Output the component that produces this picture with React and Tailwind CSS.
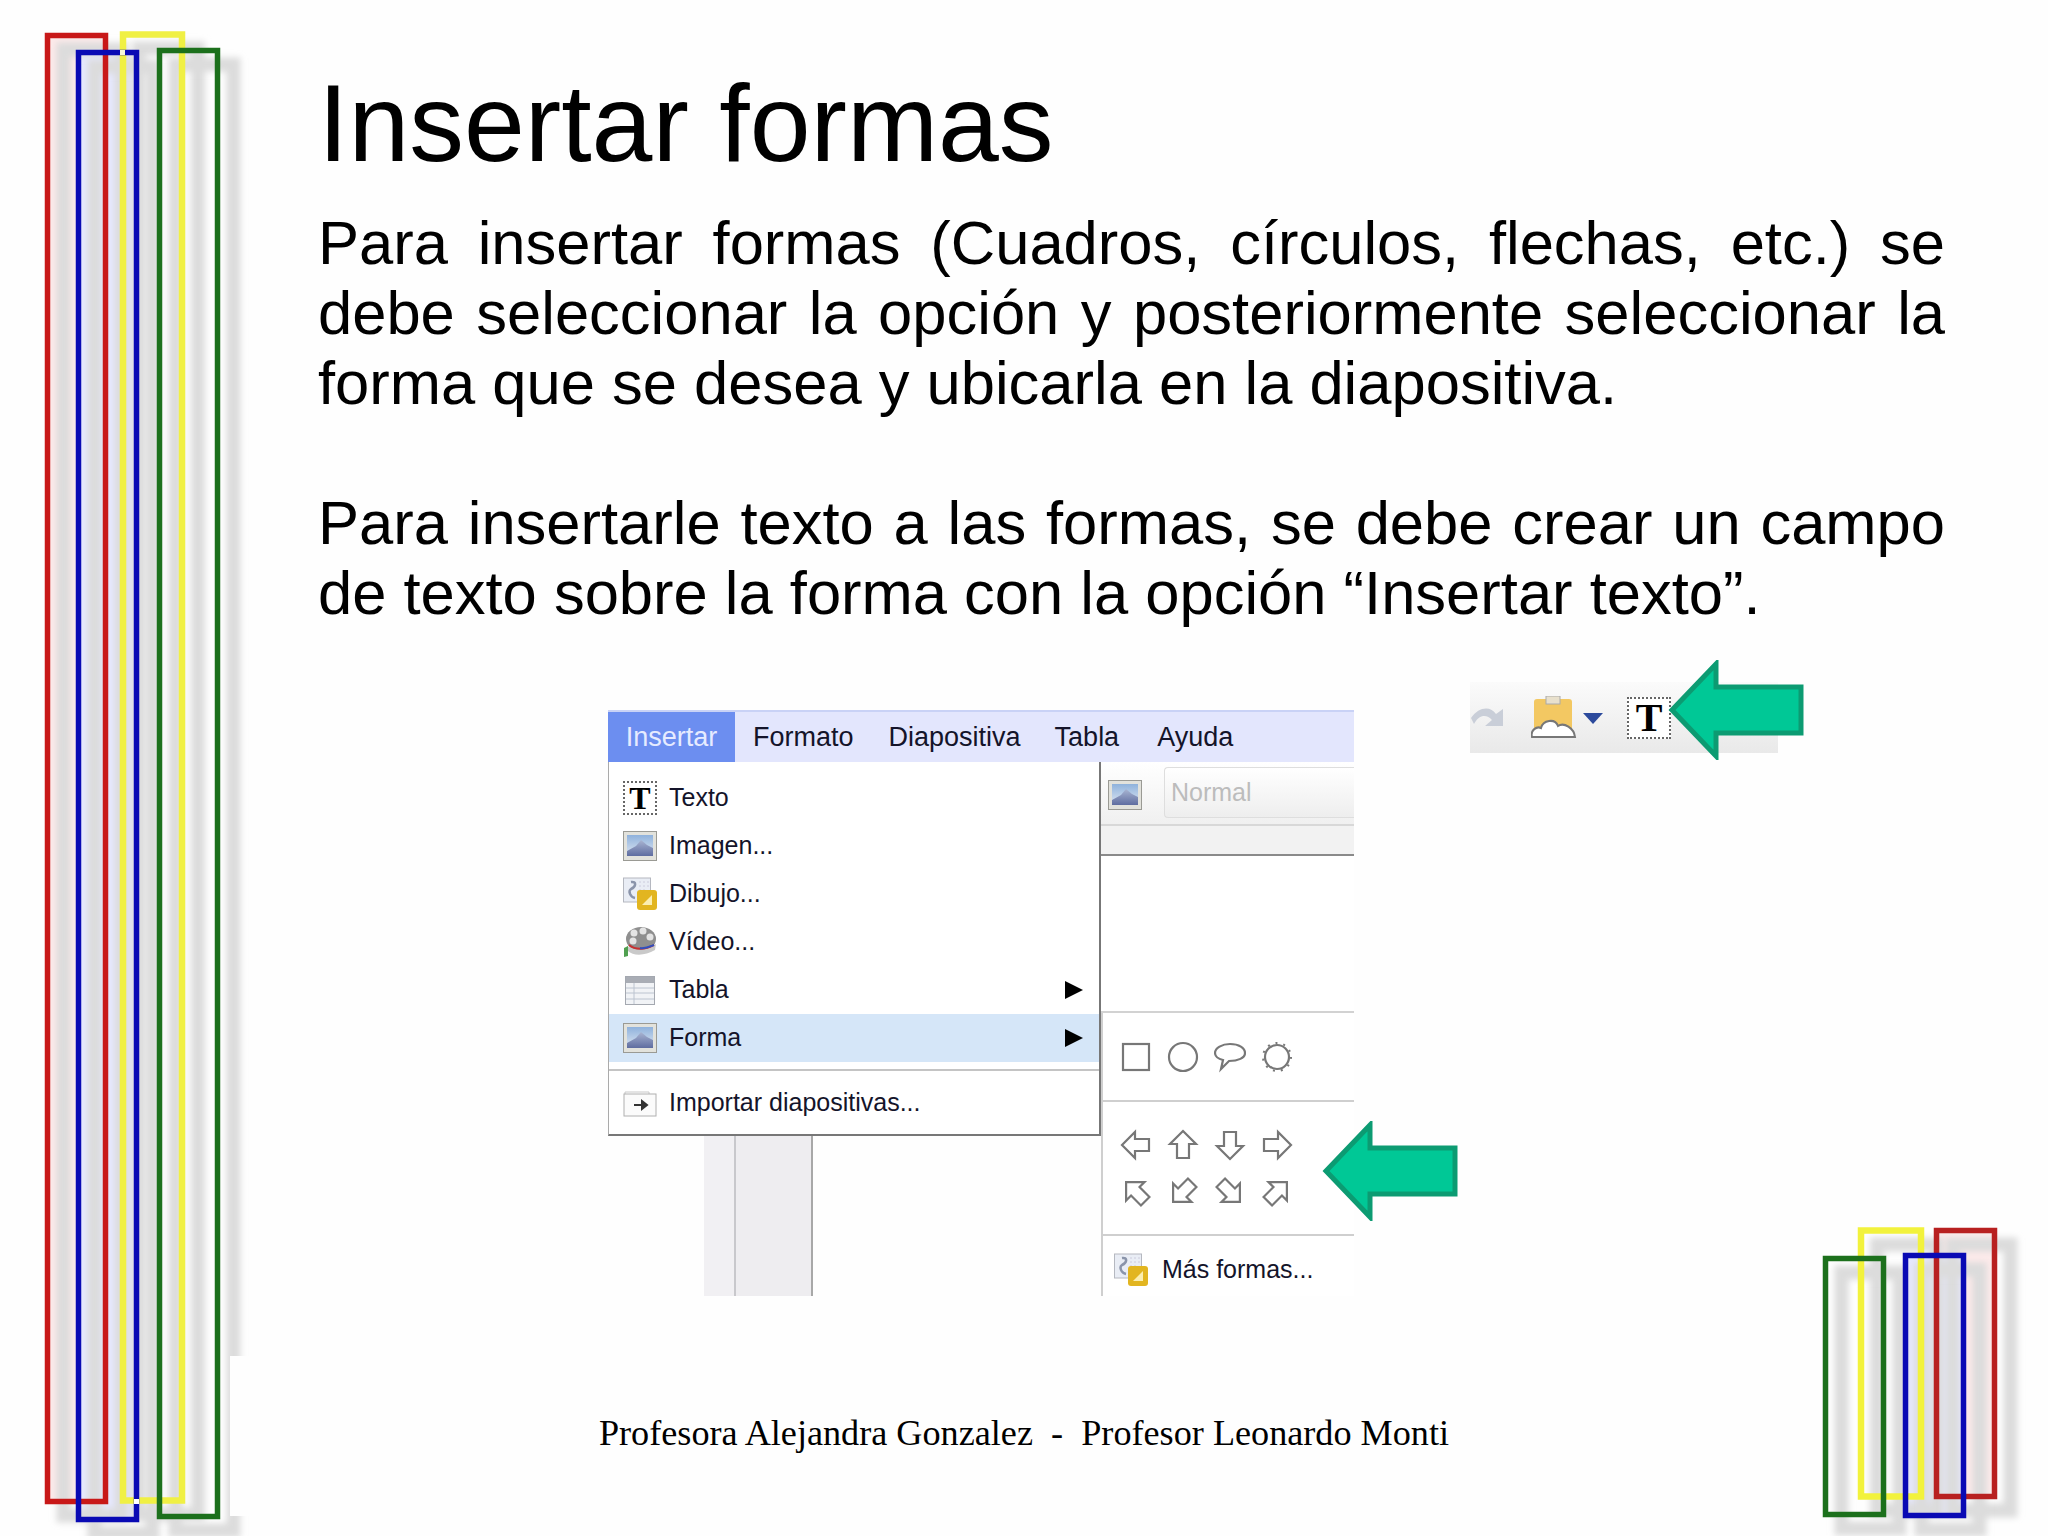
const leftBars = [
	{ x: 47.5, y: 35.5, w: 58, h: 1466, color: "#c81818", tint: "#fdeaea", width: 5.5 },
	{ x: 123, y: 34.5, w: 59, h: 1466, color: "#f0f044", tint: "none", width: 6.5 },
	{ x: 78.5, y: 52.5, w: 58, h: 1467, color: "#0a0ab4", tint: "#e6e8ff", width: 5.5 },
	{ x: 159.5, y: 50.5, w: 58, h: 1466, color: "#1c701c", tint: "none", width: 5.5 },
];

const rightBars = [
	{ x: 1861, y: 1230.5, w: 60, h: 266, color: "#f2f23c", tint: "none", width: 6.5 },
	{ x: 1936.5, y: 1230.5, w: 58, h: 266, color: "#b82020", tint: "#fdeaea", width: 5.5 },
	{ x: 1905.5, y: 1255.5, w: 58, h: 260, color: "#0a0ab4", tint: "#e6e8ff", width: 5.5 },
	{ x: 1825.5, y: 1258.5, w: 58, h: 256, color: "#1c701c", tint: "none", width: 5.5 },
];

function Bars({ id, bars, width, left, children }) {
	return (
		<svg
			className="absolute top-0"
			style={{ left }}
			width={width}
			height="1536"
			viewBox={`${left} 0 ${width} 1536`}
		>
			<defs>
				<filter id={id} x="-30%" y="-5%" width="160%" height="110%">
					<feGaussianBlur stdDeviation="3" />
				</filter>
			</defs>
			{bars.map((b) => (
				<rect
					key={b.x}
					x={b.x}
					y={b.y}
					width={b.w}
					height={b.h}
					fill={b.tint}
				/>
			))}
			{bars.map((b) => (
				<rect
					key={b.x}
					x={b.x + 16}
					y={b.y + 14}
					width={b.w}
					height={b.h}
					fill="none"
					stroke="#dcdcdc"
					strokeWidth="14"
					filter={`url(#${id})`}
				/>
			))}
			{bars.map((b) => (
				<rect
					key={b.x}
					x={b.x}
					y={b.y}
					width={b.w}
					height={b.h}
					fill="none"
					stroke={b.color}
					strokeWidth={b.width}
				/>
			))}
			{children}
		</svg>
	);
}

function ImageIcon() {
	return (
		<svg width="34" height="30" viewBox="0 0 34 30">
			<defs>
				<linearGradient id="sky" x1="0" y1="0" x2="0" y2="1">
					<stop offset="0" stopColor="#8fb2dc" />
					<stop offset="1" stopColor="#dfe7f2" />
				</linearGradient>
				<linearGradient id="hill" x1="0" y1="0" x2="0" y2="1">
					<stop offset="0" stopColor="#a9b5d2" />
					<stop offset="1" stopColor="#5f6da0" />
				</linearGradient>
			</defs>
			<rect x="0.5" y="0.5" width="33" height="29" fill="#e2e2dc" stroke="#9a9a94" />
			<rect x="4" y="4" width="26" height="21" fill="url(#sky)" />
			<path d="M4 25 L4 20 L13 15 L18 9 L24 14 L30 17 L30 25Z" fill="url(#hill)" />
		</svg>
	);
}

function DrawIcon() {
	return (
		<svg width="34" height="34" viewBox="0 0 34 34">
			<rect x="0.5" y="1" width="27" height="24" fill="#e9edf5" stroke="#b5b8c0" />
			<path d="M8 5 C14 4 13 10 8 12 C5 14 7 20 12 21" fill="none" stroke="#8a94aa" strokeWidth="2.5" />
			<path d="M16 5 H26 M16 9 H26 M16 13 H24" stroke="#ccd" strokeDasharray="2 2" />
			<rect x="14" y="13" width="20" height="20" rx="3" fill="#e2b520" />
			<path d="M19 28 L29 18 V28Z" fill="#fbeeb0" />
		</svg>
	);
}

function ReelIcon() {
	return (
		<svg width="34" height="32" viewBox="0 0 34 32">
			<ellipse cx="18" cy="13" rx="15" ry="12" fill="#8f8f8f" />
			<circle cx="11" cy="7" r="3.5" fill="#e4e4e4" />
			<circle cx="20" cy="5" r="3.5" fill="#e4e4e4" />
			<circle cx="27" cy="11" r="3.5" fill="#e4e4e4" />
			<circle cx="10" cy="15" r="3.5" fill="#e4e4e4" />
			<path d="M4 20 C12 25 24 25 33 18 L32 24 C22 30 10 30 5 25Z" fill="#c9c9c9" />
			<path d="M6 19 C12 24 22 24 31 19" fill="none" stroke="#c83030" strokeWidth="2" />
			<path d="M17 22 C22 23 26 21 31 19" fill="none" stroke="#3050c0" strokeWidth="2" />
			<path d="M1 31 V22 L5 20 V30Z" fill="#50a050" />
		</svg>
	);
}

function TableIcon() {
	return (
		<svg width="30" height="29" viewBox="0 0 30 29">
			<rect x="0.5" y="0.5" width="29" height="28" fill="#f1f3f6" stroke="#a4a8b0" />
			<rect x="1" y="1" width="28" height="6" fill="#a9adb5" />
			<path d="M1 12 H29 M1 17 H29 M1 23 H29 M9 7 V28" stroke="#bcc4d0" />
		</svg>
	);
}

function ImportIcon() {
	return (
		<svg width="34" height="30" viewBox="0 0 34 30">
			<path d="M2 6 V4 H26 V6" fill="none" stroke="#c8c8c8" />
			<rect x="1" y="6" width="32" height="22" fill="#fbfbfb" stroke="#b0b0b0" />
			<path d="M11 17 H23 M19 13 L24 17 L19 21Z" stroke="#333" strokeWidth="2" fill="#333" />
		</svg>
	);
}

function TBox({ size }) {
	return (
		<span
			className="flex items-center justify-center border-2 border-dotted border-[#666] bg-white font-bold leading-none text-black [font-family:'Liberation_Serif',serif]"
			style={{ width: size, height: size - 2, fontSize: size - 4 }}
		>
			T
		</span>
	);
}

function MenuRow({ icon, label, arrow, active }) {
	return (
		<div
			className={
				"flex h-12 items-center pl-[14px] pr-[16px] " +
				(active ? "bg-[#d5e6f8]" : "")
			}
		>
			<span className="flex w-[34px] justify-center">{icon}</span>
			<span className="ml-3 flex-1 text-[25px] text-[#14142a]">{label}</span>
			{arrow && (
				<svg width="18" height="18" viewBox="0 0 18 18">
					<path d="M0 0 L18 9 L0 18Z" fill="#000" />
				</svg>
			)}
		</div>
	);
}

function Shape({ children, rotate = 0 }) {
	return (
		<svg width="32" height="32" viewBox="0 0 32 32" fill="none" stroke="#777" strokeWidth="2.2">
			<g transform={`rotate(${rotate} 16 16)`}>{children}</g>
		</svg>
	);
}

const arrowPath = "M2 16 L15 3 V10 H29 V22 H15 V29Z";
const arrowTurns = [0, 90, 270, 180, 45, 315, 225, 135];

function GreenArrow({ className }) {
	return (
		<svg className={className} width="136" height="100" viewBox="0 0 136 100">
			<path
				d="M4 50 L48 4 V27 H133 V73 H48 V96Z"
				fill="#00c896"
				stroke="#0c9b72"
				strokeWidth="5"
			/>
		</svg>
	);
}

function MenuShot() {
	return (
		<div className="relative mt-[28px] h-[586px] w-[746px] shrink-0">
			<div className="flex h-[52px] items-stretch border-t-2 border-[#c9d2f6] bg-[#e3e6fd] text-[27px] text-[#14142a]">
				<div className="flex w-[127px] items-center justify-center bg-[#6c8ef0] text-[#e6ebff]">
					Insertar
				</div>
				<div className="ml-[18px] flex items-center">Formato</div>
				<div className="ml-[35px] flex items-center">Diapositiva</div>
				<div className="ml-[34px] flex items-center">Tabla</div>
				<div className="ml-[38px] flex items-center">Ayuda</div>
			</div>
			<div className="flex">
				<div className="w-[493px] shrink-0">
					<div className="h-[374px] border-r-2 border-b-2 border-l border-[#777] border-l-[#aaa] bg-white pt-[12px]">
						<MenuRow icon={<TBox size={36} />} label="Texto" />
						<MenuRow icon={<ImageIcon />} label="Imagen..." />
						<MenuRow icon={<DrawIcon />} label="Dibujo..." />
						<MenuRow icon={<ReelIcon />} label="Vídeo..." />
						<MenuRow icon={<TableIcon />} label="Tabla" arrow />
						<MenuRow icon={<ImageIcon />} label="Forma" arrow active />
						<div className="mt-[7px] h-[2px] bg-[#c4c4c4]" />
						<div className="mt-2">
							<MenuRow icon={<ImportIcon />} label="Importar diapositivas..." />
						</div>
					</div>
					<div className="ml-[96px] flex h-[160px] w-[109px]">
						<div className="w-8 border-r-2 border-[#c8c8cc] bg-[#f1f0f3]" />
						<div className="flex-1 border-r-2 border-[#a8a8a8] bg-[#eeedf0]" />
					</div>
				</div>
				<div className="flex-1">
					<div className="flex h-[64px] items-start border-b-2 border-[#d8d8d8] bg-gradient-to-b from-white to-[#f0f0f0] pl-[7px] pt-[5px]">
						<div className="mt-[13px]">
							<ImageIcon />
						</div>
						<div className="ml-[22px] flex h-[51px] flex-1 items-center rounded-l border border-r-0 border-[#dedede] bg-gradient-to-b from-white to-[#eeeeee] pl-1.5 text-[25px] text-[#bcbcbc]">
							Normal
						</div>
					</div>
					<div className="h-[30px] border-b-2 border-[#8a8a8a] bg-[#f2f2f2]" />
					<div className="h-[157px] border-b-2 border-[#d2d2d2] bg-white" />
					<div className="h-[89px] border-b-2 border-l-2 border-[#cfcfcf] bg-white pl-[17px] pt-[28px]">
						<div className="grid grid-cols-[47px_47px_47px_47px]">
							<Shape>
								<rect x="3" y="3" width="26" height="26" />
							</Shape>
							<Shape>
								<circle cx="16" cy="16" r="14" />
							</Shape>
							<Shape>
								<path d="M16 3 C25 3 31 7 31 12 C31 17 24 20 15 20 L7 28 L9 19 C4 18 1 15 1 12 C1 7 8 3 16 3Z" />
							</Shape>
							<Shape>
								<circle cx="16" cy="16" r="12" />
								<circle cx="16" cy="16" r="14" strokeWidth="2" strokeDasharray="2 6" />
							</Shape>
						</div>
					</div>
					<div className="h-[134px] border-b-2 border-l-2 border-[#cfcfcf] bg-white pl-[17px] pt-[27px]">
						<div className="grid grid-cols-[47px_47px_47px_47px] gap-y-[15px]">
							{arrowTurns.map((turn) => (
								<Shape key={turn} rotate={turn}>
									<path d={arrowPath} />
								</Shape>
							))}
						</div>
					</div>
					<div className="flex h-[60px] items-center border-l-2 border-[#cfcfcf] bg-white pl-[11px] pt-2 text-[25px] text-[#14142a]">
						<DrawIcon />
						<span className="ml-[14px]">Más formas...</span>
					</div>
				</div>
			</div>
			<GreenArrow className="absolute left-[714px] top-[411px]" />
		</div>
	);
}

function ToolStrip() {
	return (
		<div className="relative ml-[116px] flex h-[71px] w-[308px] shrink-0 items-center bg-gradient-to-b from-[#fbfbfb] to-[#e9e9e9]">
			<svg width="34" height="24" viewBox="0 0 34 24" className="ml-[1px]">
				<path d="M0 12 C8 0 20 0 25 8 L32 3 V20 H14 L21 14 C16 8 8 8 3 18Z" fill="#c9ced8" />
			</svg>
			<svg width="46" height="44" viewBox="0 0 46 44" className="ml-[26px]">
				<rect x="3" y="3" width="38" height="32" rx="3" fill="#f3c862" />
				<rect x="15" y="0" width="14" height="8" fill="#e8e0cc" stroke="#aaa" />
				<path d="M1 41 C-1 34 6 30 10 32 C12 24 24 22 27 30 C33 26 43 32 44 41Z" fill="#fff" stroke="#777" strokeWidth="2" />
			</svg>
			<svg width="20" height="12" viewBox="0 0 20 12" className="ml-1.5">
				<path d="M0 1 H20 L10 12Z" fill="#2c4a9c" />
			</svg>
			<div className="ml-6">
				<TBox size={44} />
			</div>
			<GreenArrow className="absolute left-[198px] top-[-22px]" />
		</div>
	);
}

export default function App() {
	return (
		<div className="relative flex h-[1536px] w-[2048px] flex-col overflow-hidden bg-[#fefefe] text-black [font-family:'Liberation_Sans',Arial,sans-serif]">
			<Bars id="shadeLeft" bars={leftBars} width={260} left={0}>
				<rect x="230" y="1356" width="30" height="160" fill="#fefefe" />
				<rect x="120" y="50" width="5" height="5" fill="#f8f8d8" />
				<rect x="134" y="1499" width="5" height="5" fill="#ffffff" />
			</Bars>
			<Bars id="shadeRight" bars={rightBars} width={248} left={1800} />
			<main className="relative pl-[318px] pr-[103px] pt-[60px]">
				<h1 className="text-[109.4px] leading-[126px]">Insertar formas</h1>
				<p className="mt-[22px] text-justify text-[61.5px] leading-[70px]">
					Para insertar formas (Cuadros, círculos, flechas, etc.) se debe
					seleccionar la opción y posteriormente seleccionar la forma que se
					desea y ubicarla en la diapositiva.
				</p>
				<p className="mt-[70px] text-justify text-[61.5px] leading-[70px]">
					Para insertarle texto a las formas, se debe crear un campo de texto
					sobre la forma con la opción “Insertar texto”.
				</p>
				<div className="mt-[54px] flex pl-[290px]">
					<MenuShot />
					<ToolStrip />
				</div>
			</main>
			<footer className="relative mt-[115px] whitespace-pre text-center text-[36.2px] leading-[44px] [font-family:'Liberation_Serif',serif]">
				Profesora Alejandra Gonzalez  -  Profesor Leonardo Monti
			</footer>
		</div>
	);
}
